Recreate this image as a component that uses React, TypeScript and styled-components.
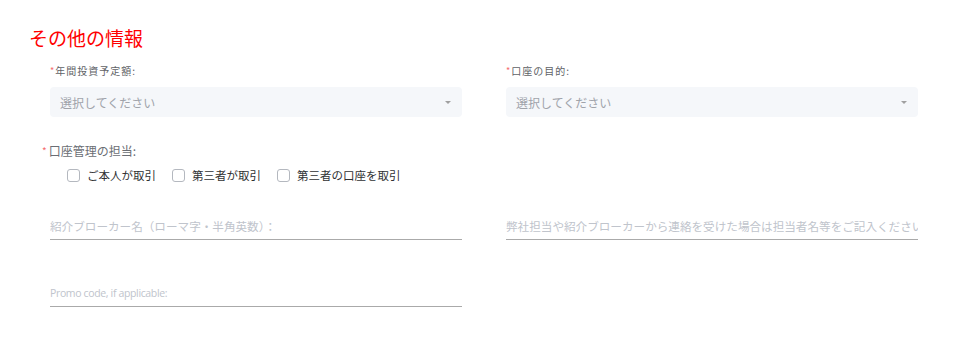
import React from 'react';
import styled, { createGlobalStyle } from 'styled-components';

const GlobalStyle = createGlobalStyle`
    html, body {
        margin: 0;
        padding: 0;
        background: #fff;
    }
    body {
        font-family: "Noto Sans CJK JP", "Noto Sans", sans-serif;
    }
`

const Page = styled.div`
    width: 964px;
    height: 342px;
    box-sizing: border-box;
    padding: 24px 46px 0 29px;
`

const Title = styled.h2`
    margin: 0;
    font-size: 19px;
    line-height: 28px;
    font-weight: 400;
    color: #ff0000;
`

const Grid = styled.div<{ top: number }>`
    display: grid;
    grid-template-columns: 412px 412px;
    column-gap: 44px;
    row-gap: 39px;
    padding-left: 21px;
    margin-top: ${({top}) => top}px;
`

const Field = styled.div`
    display: flex;
    flex-direction: column;
`

const Label = styled.label`
    display: flex;
    align-items: center;
    font-size: 10px;
    line-height: 14px;
    letter-spacing: 1px;
    color: #606266;
`

const Star = styled.span`
    color: #f56c6c;
    margin-right: 1px;
    font-size: 9px;
    letter-spacing: 0;
`

const SelectBox = styled.div`
    margin-top: 9px;
    height: 30px;
    box-sizing: border-box;
    padding: 0 11px 0 10px;
    background: #f5f7fa;
    border-radius: 4px;
    display: flex;
    align-items: center;
    justify-content: space-between;
    font-size: 12px;
    color: #a0a3aa;
    cursor: pointer;
`

const Caret = styled.span`
    width: 0;
    height: 0;
    border-left: 3px solid transparent;
    border-right: 3px solid transparent;
    border-top: 3px solid #a0a0a0;
`

const RadioGroup = styled.div`
    margin-top: 25px;
    padding-left: 13px;
`

const GroupLabel = styled.div`
    font-size: 12px;
    line-height: 17px;
    color: #6b6e74;
    display: flex;
    align-items: center;
`

const GroupStar = styled.span`
    color: #f56c6c;
    font-size: 10px;
    margin-right: 2px;
`

const Options = styled.div`
    display: flex;
    align-items: center;
    gap: 16px;
    margin-top: 8px;
    padding-left: 25px;
`

const Option = styled.label`
    display: flex;
    align-items: center;
    gap: 7px;
    font-size: 11.5px;
    line-height: 17px;
    color: #303133;
    cursor: pointer;
`

const Box = styled.span`
    width: 13px;
    height: 13px;
    box-sizing: border-box;
    border: 1px solid #b4b8bf;
    border-radius: 3px;
    background: #fff;
`

const TextInput = styled.input`
    width: 100%;
    height: 28px;
    box-sizing: border-box;
    margin: 0;
    padding: 0;
    border: none;
    border-bottom: 1px solid #aaaaaa;
    outline: none;
    background: transparent;
    font-family: "Noto Sans CJK JP", sans-serif;
    font-size: 11.6px;
    color: #303133;

    &::placeholder {
        color: #c0c4cc;
    }
`

const PromoInput = styled(TextInput)`
    font-family: "Open Sans", "Noto Sans CJK JP", sans-serif;
    font-size: 10.5px;
    letter-spacing: -0.35px;
`

const options = ['ご本人が取引', '第三者が取引', '第三者の口座を取引'];

const App = () => {
    return (
        <Page>
            <GlobalStyle />
            <Title>その他の情報</Title>
            <Grid top={12}>
                <Field>
                    <Label><Star>*</Star>年間投資予定額:</Label>
                    <SelectBox>選択してください<Caret /></SelectBox>
                </Field>
                <Field>
                    <Label><Star>*</Star>口座の目的:</Label>
                    <SelectBox>選択してください<Caret /></SelectBox>
                </Field>
            </Grid>
            <RadioGroup>
                <GroupLabel><GroupStar>*</GroupStar>口座管理の担当:</GroupLabel>
                <Options>
                    {options.map((o) => (
                        <Option key={o}><Box />{o}</Option>
                    ))}
                </Options>
            </RadioGroup>
            <Grid top={28}>
                <TextInput placeholder="紹介ブローカー名（ローマ字・半角英数）：" />
                <TextInput placeholder="弊社担当や紹介ブローカーから連絡を受けた場合は担当者名等をご記入ください" />
                <PromoInput placeholder="Promo code, if applicable:" />
            </Grid>
        </Page>
    );
};

export default App;
